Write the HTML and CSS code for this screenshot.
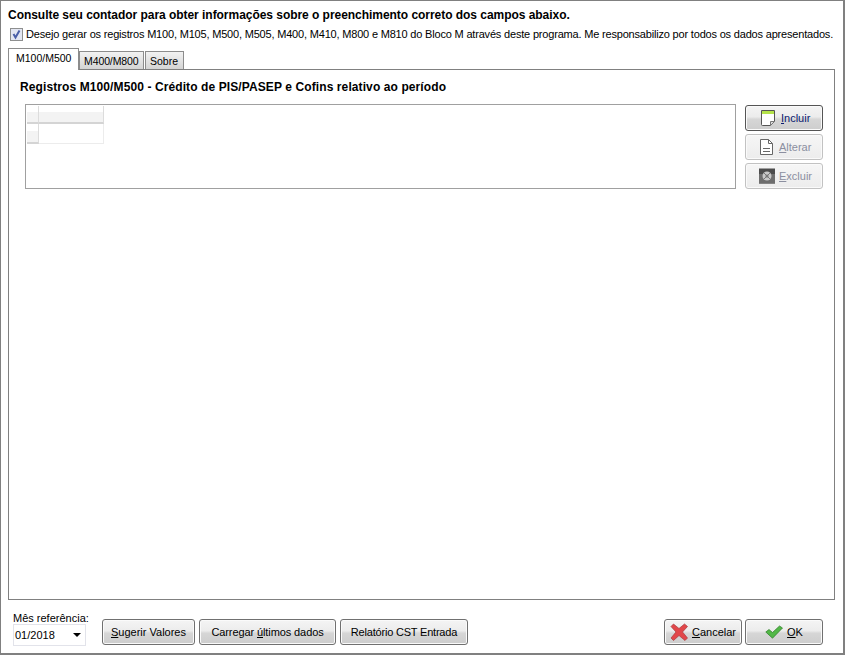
FILE: index.html
```html
<!DOCTYPE html>
<html lang="pt-BR">
<head>
<meta charset="UTF-8" />
<title>Bloco M</title>
<link rel="stylesheet" href="styles.css">
</head>
<body>

<div class="window">
  <div class="top-note">Consulte seu contador para obter informações sobre o preenchimento correto dos campos abaixo.</div>
  <label class="agree">
    <span class="checkbox">
      <svg viewBox="0 0 11 11" width="11" height="11"><path d="M2.500 5l2 3.500L8.500 1.500" fill="none" stroke="#4a5fa8" stroke-width="2"/></svg>
    </span>
    <span class="agree-text">Desejo gerar os registros M100, M105, M500, M505, M400, M410, M800 e M810 do Bloco M através deste programa. Me responsabilizo por todos os dados apresentados.</span>
  </label>

  <div class="tabs">
    <div class="tab active">M100/M500</div>
    <div class="tab second">M400/M800</div>
    <div class="tab third">Sobre</div>
  </div>

  <div class="panel">
    <div class="panel-title">Registros M100/M500 - Crédito de PIS/PASEP e Cofins relativo ao período</div>
    <div class="panel-row">
      <div class="grid-box">
        <div class="grid">
          <div class="cell head"></div><div class="cell head"></div>
          <div class="cell row-head"></div><div class="cell"></div>
        </div>
      </div>
      <div class="side-buttons">
        <div class="btn side focus">
          <svg viewBox="0 0 18 18" width="18" height="18">
            <path d="M3.500 1.500h13v11l-4 4h-8a1 1 0 0 1-1-1z" fill="#fff" stroke="#555"/>
            <rect x="4" y="2" width="12" height="3" fill="#b5e34a"/>
            <path d="M16.500 12.500h-4v4z" fill="#ddd" stroke="#777"/>
          </svg>
          <span class="lbl navy"><u>I</u>ncluir</span>
        </div>
        <div class="btn side disabled">
          <svg viewBox="0 0 18 18" width="18" height="18">
            <path d="M2.500 1.500h8l4 4v11h-12z" fill="#fff" stroke="#666"/>
            <path d="M10.500 1.500v4h4M5 10.500h7M5 13.500h7" fill="none" stroke="#666"/>
          </svg>
          <span class="lbl"><u>A</u>lterar</span>
        </div>
        <div class="btn side disabled">
          <svg viewBox="0 0 18 18" width="18" height="18">
            <rect x="1" y="1.500" width="16" height="15" fill="#4c4c4c"/>
            <rect x="1" y="7" width="16" height="9.500" fill="#6e6e6e"/>
            <circle cx="9" cy="9" r="4.500" fill="#c8c8c8"/>
            <circle cx="9" cy="9" r="1.500" fill="#666"/>
            <path d="M6 6l6 6M12 6l-6 6" stroke="#777"/>
          </svg>
          <span class="lbl"><u>E</u>xcluir</span>
        </div>
      </div>
    </div>
  </div>

  <div class="footer">
    <div class="month">
      <div class="month-label">Mês referência:</div>
      <div class="month-select">
        <span>01/2018</span>
        <span class="arrow"></span>
      </div>
    </div>
    <div class="btn sugerir"><span><u>S</u>ugerir Valores</span></div>
    <div class="btn carregar"><span>Carregar <u>ú</u>ltimos dados</span></div>
    <div class="btn relatorio"><span>Relatório CST Entrada</span></div>
    <div class="spacer"></div>
    <div class="btn cancelar">
      <svg viewBox="0 0 18 18" width="18" height="18"><path d="M3.500 1L9 5.500 14.500 1 17.500 3.500 12.500 9l5 6-2.500 2.500L9 12.500 3.500 17.500 1 15l5-6L1 3.500z" fill="#e2474a" stroke="#a83a3c" stroke-width=".7"/></svg>
      <span><u>C</u>ancelar</span>
    </div>
    <div class="btn ok">
      <svg viewBox="0 0 18 14" width="18" height="14"><path d="M.8 7L4 4.500l3.500 3L14.500 1l3 2L7.500 13.200z" fill="#52b847" stroke="#2b7a24" stroke-width=".7"/></svg>
      <span><u>O</u>K</span>
    </div>
  </div>
</div>

</body>
</html>
```

FILE: styles.css
```css
/* Reset */
* {
  margin: 0; padding: 0; box-sizing: border-box;
}
html, body {
  height: 100%;
  background: white;
  font-family: 'Liberation Sans', Arial, sans-serif;
  font-size: 12px;
  color: black;
  overflow: hidden;
}

.window {
  width: 845px;
  height: 655px;
  border-top: 1px solid #808080;
  border-left: 1px solid #808080;
  border-right: 2px solid #808080;
  border-bottom: 2px solid #808080;
  padding: 7px 0 0 7px;
  display: flex;
  flex-direction: column;
}

.top-note {
  font-weight: bold;
  height: 19px;
  line-height: 14px;
  letter-spacing: -0.04px;
}

/* checkbox line */
.agree {
  display: flex;
  align-items: center;
  gap: 3px;
  height: 14px;
  padding-left: 2px;
  white-space: nowrap;
}
.checkbox {
  width: 13px;
  height: 13px;
  border: 1px solid #8e8f8f;
  background: #e3e6f2;
  display: flex;
  align-items: center;
  justify-content: center;
}
.checkbox svg { flex-shrink: 0; }
.agree-text { font-size: 11px; letter-spacing: -0.185px; }

/* tabs */
.tabs {
  display: flex;
  align-items: flex-end;
  height: 21px;
  margin-top: 7px;
  position: relative;
  z-index: 2;
}
.tab {
  height: 18px;
  border: 1px solid #8c8c8c;
  border-bottom: none;
  background: linear-gradient(#f2f2f2, #d4d4d4);
  padding: 2px 0 0 4px;
  font-size: 10.5px;
  line-height: 14px;
}
.second { width: 65px; letter-spacing: -0.1px; }
.third { width: 39px; margin-left: 1px; }
.tab.active {
  width: 71px;
  height: 22px;
  background: white;
  padding: 2px 0 0 7px;
  margin-bottom: -1px;
}

.panel {
  width: 827px;
  height: 531px;
  border: 1px solid #808080;
  padding: 10px 11px 0 11px;
}
.panel-title {
  font-weight: bold;
  line-height: 14px;
  height: 24px;
  letter-spacing: 0.1px;
}
.panel-row {
  display: flex;
  gap: 9px;
  padding-left: 5px;
}

/* grid vazio */
.grid-box {
  width: 711px;
  height: 85px;
  border: 1px solid #a0a0a0;
}
.grid {
  display: grid;
  grid-template-columns: 12px 65px;
  grid-template-rows: 18px 20px;
  width: 77px;
  margin: 1px 0 0 1px;
}
.cell {
  border-right: 1px solid #ececec;
  border-bottom: 1px solid #ececec;
}
.head {
  background: linear-gradient(white 40%, #f3f3f3 40%);
  border-right-color: #dcdcdc;
  border-bottom: 2px solid #d4d4d4;
}
.row-head {
  background: linear-gradient(white 40%, #f3f3f3 40%);
  border-right-color: #dcdcdc;
  border-bottom: 2px solid #d4d4d4;
}

/* buttons */
.btn {
  display: flex;
  align-items: center;
  justify-content: center;
  gap: 4px;
  height: 26px;
  border: 1px solid #707070;
  border-radius: 3px;
  background: linear-gradient(#f4f4f4 0%, #ececec 45%, #d6d6d6 55%, #cdcdcd 100%);
  box-shadow: inset 0 0 0 1px #fafafa;
  font-size: 11px;
  white-space: nowrap;
}
.side-buttons {
  display: flex;
  flex-direction: column;
  gap: 3px;
  margin-top: 1px;
}
.btn.side {
  width: 78px;
  justify-content: flex-start;
  padding-left: 12px;
  gap: 3px;
}
.btn.focus { border-color: #555; gap: 5px; }
.btn.disabled {
  border-color: #c2c2c2;
  background: linear-gradient(#f6f6f6, #ececec);
  color: #8b8fa0;
}
.navy { color: #0a1a70; }

.footer {
  display: flex;
  align-items: flex-start;
  height: 53px;
  padding: 19px 0 0 5px;
  gap: 4px;
}
.month { width: 85px; margin-top: -7px; }
.month-label { font-size: 11px; line-height: 13px; }
.month-select {
  width: 73px;
  height: 22px;
  margin-top: -1px;
  border: 1px solid #e2e3ea;
  display: flex;
  align-items: center;
  justify-content: space-between;
  padding: 0 4px 0 1px;
  font-size: 11px;
}
.arrow {
  border-left: 4px solid transparent;
  border-right: 4px solid transparent;
  border-top: 4px solid black;
}
.sugerir { width: 93px; }
.carregar { width: 137px; letter-spacing: -0.1px; }
.relatorio { width: 128px; letter-spacing: -0.2px; }
.spacer { width: 188px; }
.cancelar { width: 78px; }
.ok { width: 78px; margin-left: -1px; gap: 4px; }
```
